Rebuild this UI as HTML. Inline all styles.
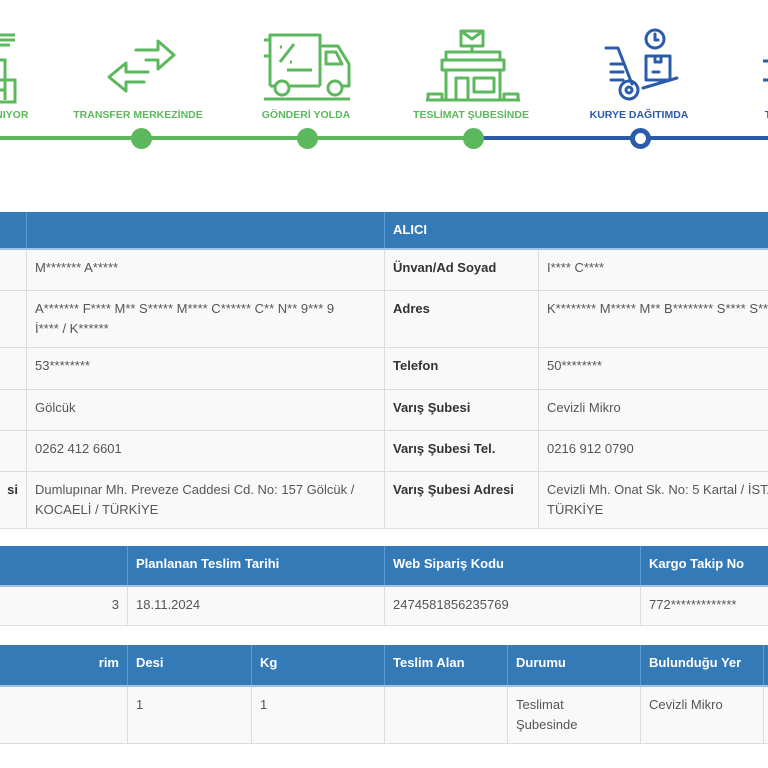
<!DOCTYPE html>
<html><head><meta charset="utf-8"><style>
*{margin:0;padding:0;box-sizing:border-box}
html,body{width:768px;height:768px;overflow:hidden}
body{background:#fff;font-family:"Liberation Sans",Arial,sans-serif;position:relative}
#w{position:absolute;left:0;top:0;width:768px;height:768px;overflow:hidden}
.lbl{position:absolute;top:109px;font-size:10.5px;font-weight:bold;white-space:nowrap;transform:translateX(-50%)}
.g{color:#5cb85c}.b{color:#2a5caa}
.ic{position:absolute;top:26px}
table{position:absolute;border-collapse:collapse;font-size:13px;color:#555;table-layout:fixed}
td,th{border:1px solid #ddd;padding:8px;vertical-align:top;text-align:left;line-height:20px;overflow:hidden}
th{background:#337ab7;color:#fff;font-weight:bold;border-color:#5b9bd5;border-top:0;border-bottom:2px solid #9fc3e6}
td{background:#f9f9f9}
td.k{font-weight:bold;color:#333}
</style></head><body><div id="w">
<div style="position:absolute;left:0;top:136px;width:473px;height:4px;background:#5cb85c"></div>
<div style="position:absolute;left:473px;top:136px;width:295px;height:4px;background:#2a5caa"></div>
<div style="position:absolute;left:131px;top:128px;width:21px;height:21px;border-radius:50%;background:#5cb85c"></div>
<div style="position:absolute;left:297px;top:128px;width:21px;height:21px;border-radius:50%;background:#5cb85c"></div>
<div style="position:absolute;left:463px;top:128px;width:21px;height:21px;border-radius:50%;background:#5cb85c"></div>
<div style="position:absolute;left:630px;top:128px;width:21px;height:21px;border-radius:50%;background:#fff;border:5px solid #2a5caa"></div>

<div class="lbl g" style="left:8px">ANIYOR</div>
<div class="lbl g" style="left:138px">TRANSFER MERKEZİNDE</div>
<div class="lbl g" style="left:306px">GÖNDERİ YOLDA</div>
<div class="lbl g" style="left:471px">TESLİMAT ŞUBESİNDE</div>
<div class="lbl b" style="left:639px">KURYE DAĞITIMDA</div>
<div class="lbl b" style="left:768px">T</div>

<svg class="ic" style="left:0;top:30px" width="20" height="75" viewBox="0 0 20 75" fill="none" stroke="#5cb85c" stroke-width="3"><path d="M0 5H15M0 10H15M0 15H10M0 30H5V70M0 50H15V72H0M0 60H5"/></svg>
<svg class="ic" style="left:106px;top:38px" width="72" height="56" viewBox="0 0 72 56" fill="none" stroke="#5cb85c" stroke-width="3" stroke-linejoin="round" stroke-linecap="round"><path d="M30 12H52V3L68 17L52 31V22H40M42 34H20V25L3 39L20 53V44H38"/></svg>
<svg class="ic" style="left:262px;top:30px" width="90" height="72" viewBox="0 0 90 72" fill="none" stroke="#5cb85c" stroke-width="3" stroke-linejoin="round"><path d="M8 56V5H58V56M58 16H76L87 34V56H80M58 56H28M8 56H12"/><path d="M64 22H74L80 34H64Z"/><circle cx="20" cy="58" r="7"/><circle cx="73" cy="58" r="7"/><path d="M18 32L32 14M18 17h2M28 32h2M2 10h6M2 26h6M25 40h25M2 69h86"/></svg>
<svg class="ic" style="left:424px;top:28px" width="98" height="76" viewBox="0 0 98 76" fill="none" stroke="#5cb85c" stroke-width="3" stroke-linejoin="round"><path d="M37 3h22v15H37ZM37 3l11 8 11-8M48 18v6M22 24h54v8H22ZM18 32h62v10H18ZM22 42v30h54V42M32 72V50h12v22M50 50h20v14H50ZM2 72h94M4 72v-6h14v6M80 72v-6h14v6"/></svg>
<svg class="ic" style="left:603px;top:28px" width="78" height="76" viewBox="0 0 78 76" fill="none" stroke="#2a5caa" stroke-width="3" stroke-linejoin="round" stroke-linecap="round"><circle cx="52" cy="11" r="9"/><path d="M52 6v6h3M43 28h24v24H43ZM52 28v6h6v-6M3 20h12l14 36M8 36h12M8 44h12M8 52h12M40 60l34-10"/><circle cx="26" cy="62" r="9"/><circle cx="26" cy="62" r="3"/><path d="M50 44h6"/></svg>
<svg class="ic" style="left:760px;top:58px" width="8" height="30" viewBox="0 0 8 30" fill="none" stroke="#2a5caa" stroke-width="3"><path d="M3 3h5M3 22h5"/></svg>

<table style="left:-60px;top:212px;width:900px">
<colgroup><col style="width:86px"><col style="width:358px"><col style="width:154px"><col></colgroup>
<tr style="height:37px"><th></th><th></th><th colspan="2">ALICI</th></tr>
<tr style="height:41px"><td class="k"></td><td>M******* A*****</td><td class="k">Ünvan/Ad Soyad</td><td>I**** C****</td></tr>
<tr style="height:56px"><td class="k"></td><td>A******* F**** M** S***** M**** C****** C** N** 9*** 9<br>İ**** / K******</td><td class="k">Adres</td><td>K******** M***** M** B******** S**** S**** İ*******</td></tr>
<tr style="height:42px"><td class="k"></td><td>53********</td><td class="k">Telefon</td><td>50********</td></tr>
<tr style="height:41px"><td class="k"></td><td>Gölcük</td><td class="k">Varış Şubesi</td><td>Cevizli Mikro</td></tr>
<tr style="height:41px"><td class="k"></td><td>0262 412 6601</td><td class="k">Varış Şubesi Tel.</td><td>0216 912 0790</td></tr>
<tr style="height:56px"><td class="k" style="text-align:right">si</td><td>Dumlupınar Mh. Preveze Caddesi Cd. No: 157 Gölcük /<br>KOCAELİ / TÜRKİYE</td><td class="k">Varış Şubesi Adresi</td><td>Cevizli Mh. Onat Sk. No: 5 Kartal / İSTANBUL /<br>TÜRKİYE</td></tr>
</table>

<table style="left:-129px;top:546px;width:1025px">
<colgroup><col style="width:256px"><col style="width:257px"><col style="width:256px"><col></colgroup>
<tr style="height:40px"><th></th><th>Planlanan Teslim Tarihi</th><th>Web Sipariş Kodu</th><th>Kargo Takip No</th></tr>
<tr style="height:39px"><td style="text-align:right">3</td><td>18.11.2024</td><td>2474581856235769</td><td>772*************</td></tr>
</table>

<table style="left:-129px;top:645px;width:1000px">
<colgroup><col style="width:256px"><col style="width:124px"><col style="width:133px"><col style="width:123px"><col style="width:133px"><col style="width:123px"><col></colgroup>
<tr style="height:41px"><th style="text-align:right">rim</th><th>Desi</th><th>Kg</th><th>Teslim Alan</th><th>Durumu</th><th>Bulunduğu Yer</th><th></th></tr>
<tr style="height:57px"><td></td><td>1</td><td>1</td><td></td><td>Teslimat<br>Şubesinde</td><td>Cevizli Mikro</td><td></td></tr>
</table>
</div></body></html>
